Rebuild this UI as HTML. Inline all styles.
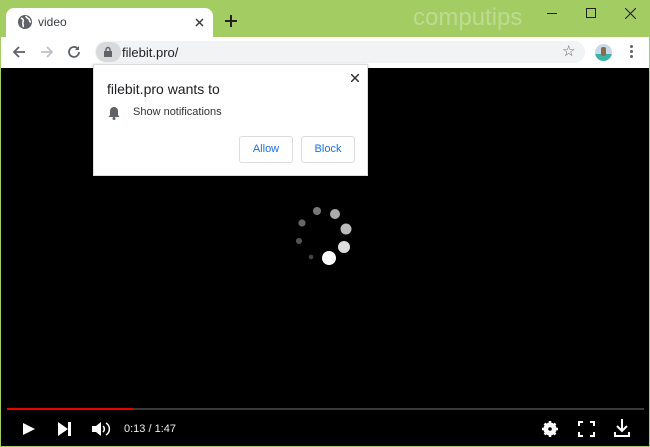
<!DOCTYPE html>
<html><head><style>
*{margin:0;padding:0;box-sizing:border-box}
body{width:650px;height:447px;overflow:hidden;background:#a3cd62;font-family:"Liberation Sans",sans-serif;position:relative}
.abs{position:absolute}
</style></head><body>
<div class="abs" style="left:6px;top:8px;width:207px;height:30px;background:#fff;border-radius:8px 8px 0 0"></div>
<svg class="abs" style="left:17px;top:14px" width="16" height="16" viewBox="0 0 16 16"><circle cx="8" cy="8" r="7" fill="#5f6368"/><path d="M4 4c2 1 3 2 2 4s1 3 0 5M9 2c0 2 2 2 3 3s0 3 2 3" stroke="#fff" stroke-width="1.6" fill="none"/></svg>
<div class="abs" style="left:38px;top:15px;font-size:12px;color:#3c4043">video</div>
<svg class="abs" style="left:195px;top:18px" width="9" height="9" viewBox="0 0 9 9"><path d="M1 1L8 8M8 1L1 8" stroke="#3c4043" stroke-width="1.5"/></svg>
<svg class="abs" style="left:225px;top:15px" width="12" height="12" viewBox="0 0 12 12"><path d="M6 0v12M0 6h12" stroke="#222" stroke-width="2"/></svg>
<div class="abs" style="left:413px;top:4px;font-size:24px;color:#bddb92">computips</div>
<div class="abs" style="left:547px;top:13px;width:10px;height:1px;background:#222"></div>
<div class="abs" style="left:586px;top:8px;width:10px;height:10px;border:1px solid #222"></div>
<svg class="abs" style="left:625px;top:8px" width="11" height="11" viewBox="0 0 11 11"><path d="M0 0L11 11M11 0L0 11" stroke="#222" stroke-width="1.1"/></svg>

<div class="abs" style="left:1px;top:37px;width:648px;height:31px;background:#fff"></div>
<svg class="abs" style="left:11px;top:44px" width="16" height="16" viewBox="0 0 16 16"><path d="M14 8H3M8 3L3 8l5 5" stroke="#5f6368" stroke-width="1.8" fill="none"/></svg>
<svg class="abs" style="left:39px;top:44px" width="16" height="16" viewBox="0 0 16 16"><path d="M2 8h11M8 3l5 5-5 5" stroke="#bdc1c6" stroke-width="1.8" fill="none"/></svg>
<svg class="abs" style="left:66px;top:44px" width="16" height="16" viewBox="0 0 16 16"><path d="M13 8a5 5 0 1 1-1.5-3.6" stroke="#5f6368" stroke-width="1.8" fill="none"/><path d="M13 2v4H9z" fill="#5f6368"/></svg>
<div class="abs" style="left:95px;top:41px;width:490px;height:22px;background:#f1f3f4;border-radius:11px"></div>
<div class="abs" style="left:96px;top:42px;width:25px;height:20px;background:#d7d9db;border-radius:10px"></div>
<svg class="abs" style="left:103px;top:46px" width="10" height="12" viewBox="0 0 10 12"><rect x="1" y="5" width="8" height="6" fill="#5f6368"/><path d="M3 5V3.5a2 2 0 0 1 4 0V5" stroke="#5f6368" stroke-width="1.4" fill="none"/></svg>
<div class="abs" style="left:122px;top:45px;font-size:13px;color:#202124">filebit.pro/</div>
<div class="abs" style="left:562px;top:42px;font-size:15px;color:#5f6368">☆</div>
<div class="abs" style="left:595px;top:44px;width:17px;height:17px;border-radius:50%;background:linear-gradient(#c9d9e8 60%,#3fb2a8 60%)"></div>
<div class="abs" style="left:601px;top:47px;width:5px;height:9px;background:#8a6c4b;border-radius:2px"></div>
<div class="abs" style="left:630px;top:45px;width:3px;height:3px;background:#5f6368;border-radius:50%;box-shadow:0 5px #5f6368,0 10px #5f6368"></div>

<div class="abs" style="left:1px;top:68px;width:648px;height:378px;background:#000"></div>
<svg class="abs" style="left:0;top:0" width="650" height="447">
<circle cx="317" cy="211" r="4" fill="#777"/><circle cx="335" cy="214" r="5" fill="#aaa"/><circle cx="346" cy="229" r="5.5" fill="#bbb"/><circle cx="344" cy="247" r="6" fill="#ddd"/><circle cx="329" cy="258" r="7" fill="#fff"/><circle cx="311" cy="257" r="2.3" fill="#444"/><circle cx="299" cy="241" r="3" fill="#555"/><circle cx="302" cy="223" r="3.6" fill="#666"/>
<rect x="7" y="408" width="637" height="2" fill="#3a3a3a"/><rect x="7" y="408" width="126" height="2" fill="#e00"/>
<path d="M23 423l12 6-12 6z" fill="#fff"/>
<path d="M58 422l10 7-10 7z M68 422h3v14h-3z" fill="#fff"/>
<path d="M92 426h4l5-4v14l-5-4h-4z" fill="#fff"/><path d="M103 426a4 4 0 0 1 0 6M106 423a7 7 0 0 1 0 12" stroke="#fff" stroke-width="1.5" fill="none"/>
<circle cx="550" cy="429" r="5" fill="none" stroke="#fff" stroke-width="3"/><path d="M550 421v16M542 429h16M544.5 423.5l11 11M555.5 423.5l-11 11" stroke="#fff" stroke-width="2.5"/><circle cx="550" cy="429" r="1.8" fill="#000"/>
<path d="M579 426v-4h4M590 422h4v4M594 432v4h-4M583 436h-4v-4" stroke="#fff" stroke-width="2" fill="none"/>
<path d="M622 419v12M617 426l5 5 5-5M615 432v4h14v-4" stroke="#fff" stroke-width="2" fill="none"/>
</svg>
<div class="abs" style="left:124px;top:423px;font-size:11px;color:#eee">0:13 / 1:47</div>

<div class="abs" style="left:93px;top:64px;width:275px;height:112px;background:#fff;border:1px solid #ddd;box-shadow:0 1px 3px rgba(0,0,0,.3)"></div>
<svg class="abs" style="left:351px;top:74px" width="8" height="8" viewBox="0 0 8 8"><path d="M0 0L8 8M8 0L0 8" stroke="#333" stroke-width="1.5"/></svg>
<div class="abs" style="left:107px;top:81px;font-size:14px;color:#202124">filebit.pro wants to</div>
<svg class="abs" style="left:108px;top:106px" width="12" height="14" viewBox="0 0 12 14"><path d="M6 1a4 4 0 0 0-4 4v4l-1.5 2h11L10 9V5a4 4 0 0 0-4-4z" fill="#5f6368"/><circle cx="6" cy="12.5" r="1.5" fill="#5f6368"/></svg>
<div class="abs" style="left:133px;top:106px;font-size:11px;color:#333">Show notifications</div>
<div class="abs" style="left:239px;top:136px;width:54px;height:27px;border:1px solid #dadce0;border-radius:3px;font-size:11px;color:#1a73e8;text-align:center;line-height:25px">Allow</div>
<div class="abs" style="left:301px;top:136px;width:54px;height:27px;border:1px solid #dadce0;border-radius:3px;font-size:11px;color:#1a73e8;text-align:center;line-height:25px">Block</div>
</body></html>
